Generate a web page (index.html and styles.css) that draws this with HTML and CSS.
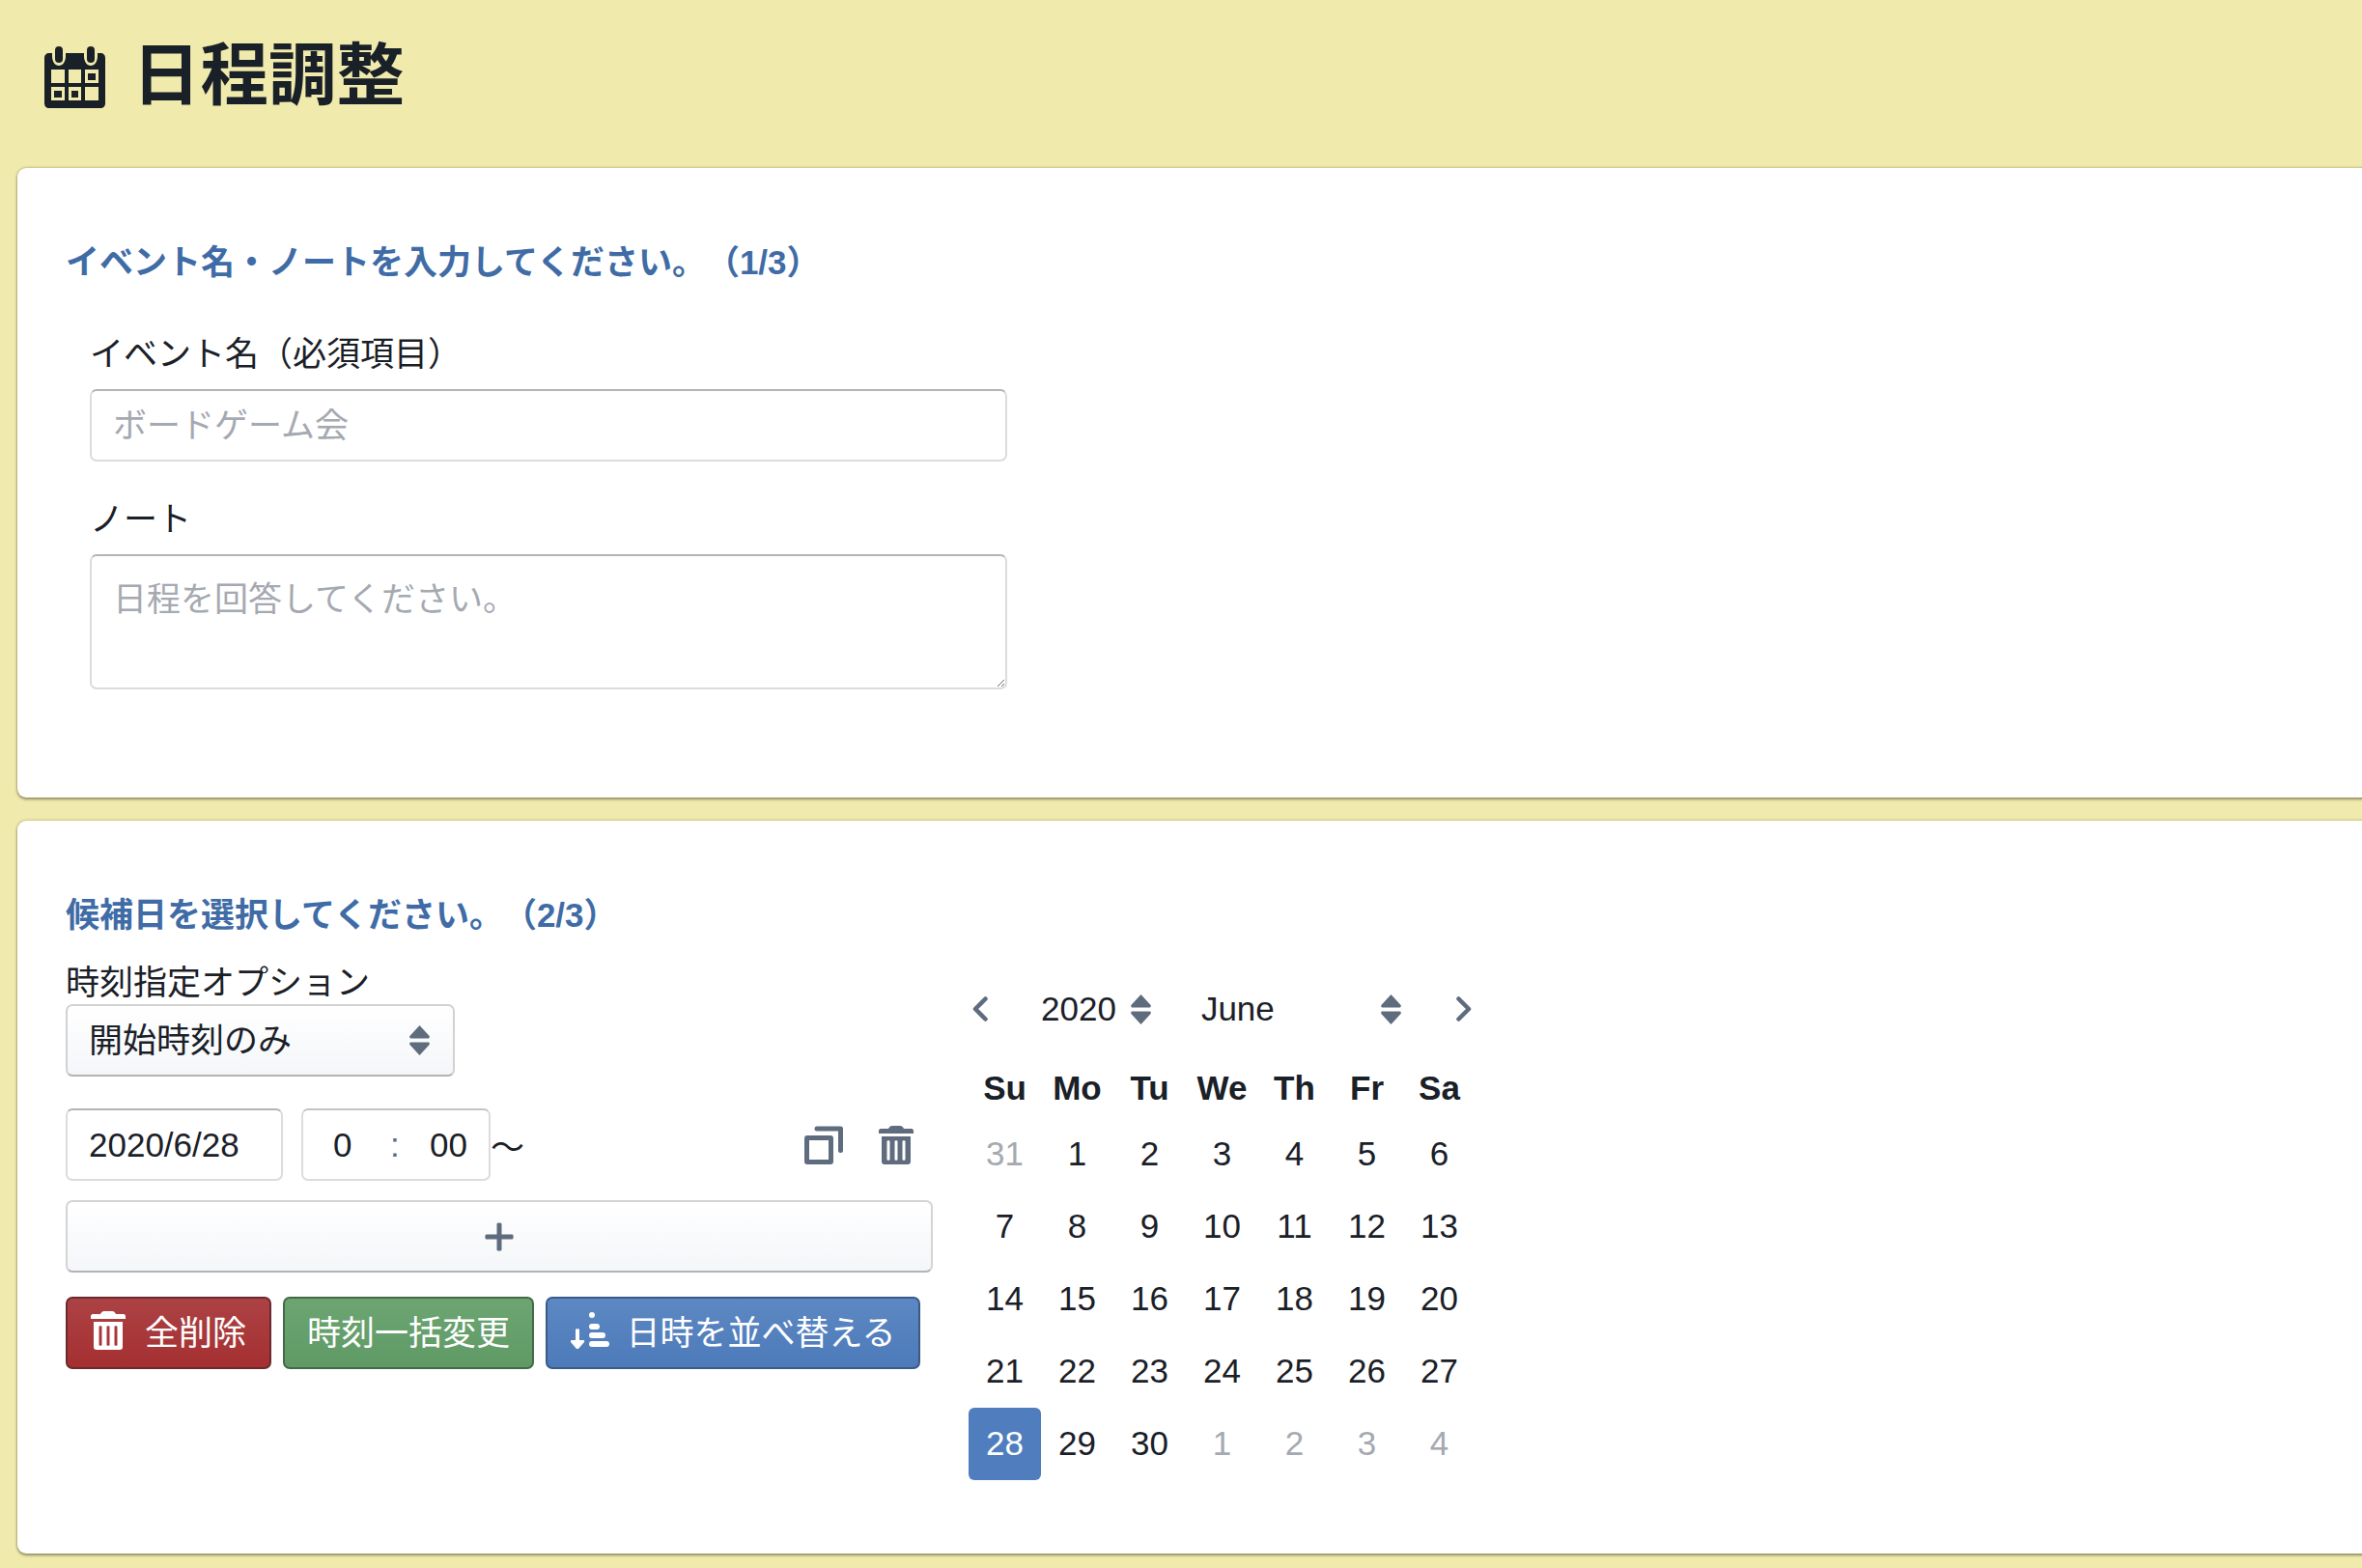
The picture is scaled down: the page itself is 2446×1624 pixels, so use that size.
FILE: index.html
```html
<!DOCTYPE html>
<html lang="ja">
  <head>
    <meta charset="utf-8">
    <title>日程調整</title>
    <link rel="stylesheet" href="styles.css">
  </head>
  <body>
    <header class="page_header">
      <svg class="logo_icon" viewBox="0 0 63 64" aria-hidden="true">
        <path fill="#1a2027" fill-rule="evenodd" d="M5 7H8V10C8 16 11 20 15 20C19 20 22 16 22 10V7H41V10C41 16 44 20 48 20C52 20 55 16 55 10V7H58C61 7 63 9 63 12V59C63 62 61 64 58 64H5C2 64 0 62 0 59V12C0 9 2 7 5 7ZM7 24V38H21V24ZM25 24V38H38V24ZM42 24V38H56V24ZM7 42V56H21V42ZM25 42V56H38V42ZM42 42V56H56V42Z"/>
        <rect fill="#1a2027" x="11" y="0" width="8" height="17" rx="4"/>
        <rect fill="#1a2027" x="44" y="0" width="8" height="17" rx="4"/>
        <rect fill="#1a2027" x="45" y="28" width="8" height="7"/>
        <rect fill="#1a2027" x="10" y="46" width="8" height="7"/>
        <rect fill="#1a2027" x="28" y="46" width="7" height="7"/>
      </svg>
      <h1>日程調整</h1>
    </header>

    <section class="card card_event">
      <h2 class="card_title">イベント名・ノートを入力してください。（1/3）</h2>
      <div class="event_form">
        <label class="field_label" for="event_name">イベント名（必須項目）</label>
        <input class="text_box" type="text" id="event_name" placeholder="ボードゲーム会">
        <label class="field_label note_label" for="event_note">ノート</label>
        <textarea class="text_box note_box" id="event_note" placeholder="日程を回答してください。"></textarea>
      </div>
    </section>

    <section class="card card_dates">
      <h2 class="card_title">候補日を選択してください。（2/3）</h2>
      <div class="date_columns">
        <div class="left_col">
          <label class="option_label" for="time_option">時刻指定オプション</label>
          <div class="select_wrap">
            <select class="option_select" id="time_option">
              <option>開始時刻のみ</option>
            </select>
            <svg class="select_arrows" viewBox="0 0 20 30" aria-hidden="true">
              <path fill="#5f6c7e" d="M10 0L20 11C20 12.500 19.500 13 19 13H1C0.500 13 0 12.500 0 11ZM1 17H19C19.500 17 20 17.500 20 19L10 30L0 19C0 17.500 0.500 17 1 17Z"/>
            </svg>
          </div>

          <div class="date_row">
            <input class="text_box date_box" type="text" value="2020/6/28">
            <div class="time_box">
              <span>0</span>
              <span class="time_sep">:</span>
              <span>00</span>
            </div>
            <span class="tilde">～</span>
            <div class="row_icons">
              <svg class="row_icon copy_icon" viewBox="0 0 40 40" aria-hidden="true">
                <path fill="#5f6c7e" fill-rule="evenodd" d="M3 10H27C29 10 30 11 30 13V37C30 39 29 40 27 40H3C1 40 0 39 0 37V13C0 11 1 10 3 10ZM5 15V35H25V15Z"/>
                <path fill="none" stroke="#5f6c7e" stroke-width="5" stroke-linecap="round" stroke-linejoin="round" d="M13 3H37.500V25.500"/>
              </svg>
              <svg class="row_icon trash_icon" viewBox="0 0 36 40" aria-hidden="true">
                <path fill="#5f6c7e" fill-rule="evenodd" d="M14 0H22C24 0 25 1 26 3H34C35 3 36 4 36 5V8H0V5C0 4 1 3 2 3H10C11 1 12 0 14 0ZM3 11H33V37C33 39 32 40 30 40H6C4 40 3 39 3 37ZM8.500 16V35C8.500 36 11.500 36 11.500 35V16C11.500 15 8.500 15 8.500 16ZM16.500 16V35C16.500 36 19.500 36 19.500 35V16C19.500 15 16.500 15 16.500 16ZM24.500 16V35C24.500 36 27.500 36 27.500 35V16C27.500 15 24.500 15 24.500 16Z"/>
              </svg>
            </div>
          </div>

          <button class="add_btn" type="button" aria-label="追加">
            <svg viewBox="0 0 30 30" aria-hidden="true">
              <path fill="#5f6c7e" d="M12.500 1.500C12.500 0 17.500 0 17.500 1.500V12.500H28.500C30 12.500 30 17.500 28.500 17.500H17.500V28.500C17.500 30 12.500 30 12.500 28.500V17.500H1.500C0 17.500 0 12.500 1.500 12.500H12.500Z"/>
            </svg>
          </button>

          <div class="action_row">
            <button class="action_btn btn_red" type="button">
              <svg class="btn_icon trash_btn_icon" viewBox="0 0 36 40" aria-hidden="true">
                <path fill="#fff" fill-rule="evenodd" d="M14 0H22C24 0 25 1 26 3H34C35 3 36 4 36 5V8H0V5C0 4 1 3 2 3H10C11 1 12 0 14 0ZM3 11H33V37C33 39 32 40 30 40H6C4 40 3 39 3 37ZM8.500 16V35C8.500 36 11.500 36 11.500 35V16C11.500 15 8.500 15 8.500 16ZM16.500 16V35C16.500 36 19.500 36 19.500 35V16C19.500 15 16.500 15 16.500 16ZM24.500 16V35C24.500 36 27.500 36 27.500 35V16C27.500 15 24.500 15 24.500 16Z"/>
              </svg>
              全削除
            </button>
            <button class="action_btn btn_green" type="button">時刻一括変更</button>
            <button class="action_btn btn_blue" type="button">
              <svg class="btn_icon sort_icon" viewBox="0 0 40 38" aria-hidden="true">
                <path fill="#fff" d="M5 18C5 17 9 17 9 18V29H13C14 29 14.500 30 14 31L8 38H6L0 31C-0.500 30 0 29 1 29H5Z"/>
                <circle fill="#fff" cx="22" cy="3" r="3"/>
                <rect fill="#fff" x="19" y="12" width="11" height="6" rx="3"/>
                <rect fill="#fff" x="19" y="21" width="17" height="6" rx="3"/>
                <rect fill="#fff" x="19" y="30" width="21" height="6" rx="3"/>
              </svg>
              日時を並べ替える
            </button>
          </div>
        </div>

        <div class="calendar">
          <div class="cal_nav">
            <svg class="cal_arrow" viewBox="0 0 16 26" aria-hidden="true">
              <path fill="none" stroke="#5f6c7e" stroke-width="4.500" stroke-linecap="round" stroke-linejoin="round" d="M13.500 2.500L3 13L13.500 23.500"/>
            </svg>
            <span class="cal_year">2020</span>
            <svg class="cal_updown year_updown" viewBox="0 0 20 30" aria-hidden="true">
              <path fill="#5f6c7e" d="M10 0L20 11C20 12.500 19.500 13 19 13H1C0.500 13 0 12.500 0 11ZM1 17H19C19.500 17 20 17.500 20 19L10 30L0 19C0 17.500 0.500 17 1 17Z"/>
            </svg>
            <span class="cal_month">June</span>
            <svg class="cal_updown month_updown" viewBox="0 0 20 30" aria-hidden="true">
              <path fill="#5f6c7e" d="M10 0L20 11C20 12.500 19.500 13 19 13H1C0.500 13 0 12.500 0 11ZM1 17H19C19.500 17 20 17.500 20 19L10 30L0 19C0 17.500 0.500 17 1 17Z"/>
            </svg>
            <svg class="cal_arrow next_arrow" viewBox="0 0 16 26" aria-hidden="true">
              <path fill="none" stroke="#5f6c7e" stroke-width="4.500" stroke-linecap="round" stroke-linejoin="round" d="M2.500 2.500L13 13L2.500 23.500"/>
            </svg>
          </div>
          <div class="cal_grid">
            <span class="cal_head">Su</span><span class="cal_head">Mo</span><span class="cal_head">Tu</span><span class="cal_head">We</span><span class="cal_head">Th</span><span class="cal_head">Fr</span><span class="cal_head">Sa</span>
            <span class="cal_day muted">31</span><span class="cal_day">1</span><span class="cal_day">2</span><span class="cal_day">3</span><span class="cal_day">4</span><span class="cal_day">5</span><span class="cal_day">6</span>
            <span class="cal_day">7</span><span class="cal_day">8</span><span class="cal_day">9</span><span class="cal_day">10</span><span class="cal_day">11</span><span class="cal_day">12</span><span class="cal_day">13</span>
            <span class="cal_day">14</span><span class="cal_day">15</span><span class="cal_day">16</span><span class="cal_day">17</span><span class="cal_day">18</span><span class="cal_day">19</span><span class="cal_day">20</span>
            <span class="cal_day">21</span><span class="cal_day">22</span><span class="cal_day">23</span><span class="cal_day">24</span><span class="cal_day">25</span><span class="cal_day">26</span><span class="cal_day">27</span>
            <span class="cal_day selected">28</span><span class="cal_day">29</span><span class="cal_day">30</span><span class="cal_day muted">1</span><span class="cal_day muted">2</span><span class="cal_day muted">3</span><span class="cal_day muted">4</span>
          </div>
        </div>
      </div>
    </section>
  </body>
</html>
```

FILE: styles.css
```css
html {
  font-family: "Liberation Sans", "Noto Sans CJK JP", sans-serif;
  text-spacing-trim: space-all;
}

body {
  margin: 0;
  height: 1624px;
  overflow: hidden;
  background-color: #f0eaad;
  color: #1a2027;
  font-size: 35px;
}

.page_header {
  height: 174px;
  padding-left: 46px;
  box-sizing: border-box;
  display: flex;
  align-items: flex-start;
}

.logo_icon {
  width: 63px;
  height: 64px;
  margin-top: 48px;
}

h1 {
  margin: 39px 0 0 28px;
  font-size: 70.500px;
  line-height: 80px;
  font-weight: 700;
}

.card {
  margin-left: 18px;
  margin-right: -20px;
  background-color: #fff;
  border-radius: 9px;
  box-shadow: 0 0 3px rgba(120, 110, 50, 0.6), 0 2px 3px rgba(0, 0, 0, 0.35);
  box-sizing: border-box;
}

.card_event {
  height: 652px;
  padding: 70px 0 0 50px;
}

.card_dates {
  height: 759px;
  margin-top: 24px;
  padding: 70px 0 0 50px;
}

.card_title {
  margin: 0;
  font-size: 35px;
  line-height: 56px;
  font-weight: 700;
  color: #3f6ca6;
}

.event_form {
  width: 950px;
  margin-left: 25px;
  margin-top: 46px;
}

.field_label {
  display: block;
  height: 41px;
  line-height: 41px;
  margin-top: 16px;
  margin-bottom: 16px;
}

.note_label {
  margin-top: 39px;
}

.text_box {
  display: block;
  box-sizing: border-box;
  width: 100%;
  height: 75px;
  padding: 0 22px;
  border: 2px solid #dcdcdc;
  border-top-color: #b4b4b4;
  border-radius: 7px;
  background: #fff;
  color: #1a2027;
  font: inherit;
  outline: none;
}

.text_box::placeholder {
  color: #a5a9b1;
  opacity: 1;
}

.note_box {
  height: 140px;
  padding-top: 24px;
  line-height: 41px;
}

.date_columns {
  display: flex;
  gap: 37px;
}

.left_col {
  width: 898px;
}

.option_label {
  display: block;
  height: 41px;
  line-height: 41px;
  margin-top: 21px;
  margin-bottom: 2px;
}

.select_wrap {
  position: relative;
  width: 403px;
}

.option_select {
  display: block;
  width: 100%;
  height: 75px;
  padding: 0 22px;
  box-sizing: border-box;
  appearance: none;
  border: 2px solid #d2d2d2;
  border-bottom-color: #b4b4b4;
  border-radius: 7px;
  background: linear-gradient(#fff, #f4f6f9);
  color: #1a2027;
  font: inherit;
}

.select_arrows {
  position: absolute;
  right: 26px;
  top: 22px;
  width: 21px;
  height: 31px;
}

.date_row {
  display: flex;
  align-items: center;
  margin-top: 33px;
  height: 75px;
}

.date_box {
  width: 225px;
}

.time_box {
  width: 196px;
  height: 75px;
  margin-left: 19px;
  padding: 0 22px 0 31px;
  box-sizing: border-box;
  display: flex;
  align-items: center;
  justify-content: space-between;
  border: 2px solid #dcdcdc;
  border-top-color: #c4c4c4;
  border-radius: 7px;
}

.time_sep {
  margin-left: 8px;
  color: #5f6c7e;
}

.tilde {
  width: 36px;
}

.row_icons {
  margin-left: auto;
  display: flex;
  align-items: center;
  gap: 37px;
  margin-right: 20px;
}

.row_icon {
  height: 40px;
  display: block;
}

.copy_icon {
  width: 40px;
}

.trash_icon {
  width: 36px;
}

.add_btn {
  display: flex;
  align-items: center;
  justify-content: center;
  width: 898px;
  height: 75px;
  margin-top: 20px;
  padding: 0;
  box-sizing: border-box;
  border: 2px solid #d4d4d4;
  border-bottom-color: #b4b4b4;
  border-radius: 7px;
  background: linear-gradient(#fff, #f4f6f9);
}

.add_btn svg {
  width: 30px;
  height: 30px;
}

.action_row {
  display: flex;
  gap: 12px;
  margin-top: 25px;
}

.action_btn {
  height: 75px;
  padding: 0 0 6px;
  box-sizing: border-box;
  display: flex;
  align-items: center;
  justify-content: center;
  border: 2px solid;
  border-radius: 7px;
  color: #fff;
  font: inherit;
}

.btn_red {
  width: 213px;
  gap: 20px;
  border-color: #6c2a2d;
  background: linear-gradient(#ac4244, #a52f31);
}

.btn_green {
  width: 260px;
  border-color: #44694a;
  background: linear-gradient(#6ca572, #5f9a65);
}

.btn_blue {
  width: 388px;
  gap: 18px;
  border-color: #3c5a86;
  background: linear-gradient(#5c88c3, #4d7ab9);
}

.btn_icon {
  display: block;
  flex: none;
}

.trash_btn_icon {
  width: 36px;
  height: 40px;
}

.sort_icon {
  width: 40px;
  height: 38px;
}

.calendar {
  width: 525px;
  margin-top: 39px;
}

.cal_nav {
  height: 60px;
  display: flex;
  align-items: center;
}

.cal_arrow {
  width: 16px;
  height: 26px;
  margin-left: 4px;
  flex: none;
}

.next_arrow {
  margin-left: 57px;
}

.cal_year {
  margin-left: 55px;
}

.year_updown {
  margin-left: 15px;
}

.cal_month {
  margin-left: 52px;
}

.month_updown {
  margin-left: 110px;
}

.cal_updown {
  width: 21px;
  height: 31px;
  flex: none;
}

.cal_grid {
  display: grid;
  grid-template-columns: repeat(7, 75px);
  grid-template-rows: 61px;
  grid-auto-rows: 75px;
  margin-top: 22px;
}

.cal_head,
.cal_day {
  display: flex;
  align-items: center;
  justify-content: center;
  padding-bottom: 2px;
  box-sizing: border-box;
}

.cal_head {
  font-weight: 700;
}

.muted {
  color: #a5a9b1;
}

.selected {
  background-color: #4f7dbd;
  color: #fff;
  border-radius: 6px;
}
```
